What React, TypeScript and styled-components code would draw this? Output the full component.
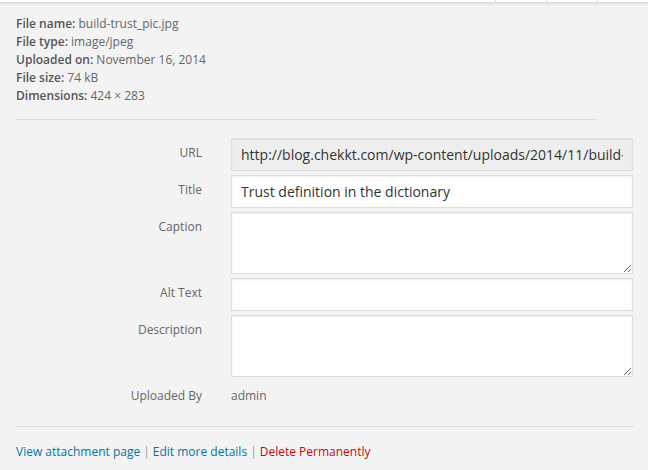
import styled, { createGlobalStyle } from "styled-components";

const GlobalStyle = createGlobalStyle`
  html, body {
    margin: 0;
    padding: 0;
    background: #f3f3f3;
  }
  body {
    font-family: "Open Sans", "Liberation Sans", sans-serif;
    color: #444;
  }
  * { box-sizing: border-box; }
`;

const Sidebar = styled.div`
  width: 648px;
  height: 470px;
  background: #f3f3f3;
  overflow: hidden;
`;

const Toolbar = styled.div`
  height: 3px;
  background: #fff;
  border-bottom: 1px solid #dcdcdc;
  box-shadow: 0 1px 2px rgba(0, 0, 0, 0.08);
  display: flex;
  justify-content: flex-end;
`;

const ToolButton = styled.div`
  width: 51px;
  border-left: 1px solid #dcdcdc;
`;

const Details = styled.div`
  margin: 0 16px;
  padding: 12px 0 14px;
  border-bottom: 1px solid #ddd;
  width: 581px;
  font-size: 12px;
  line-height: 18px;
  color: #666;
`;

const DetailLine = styled.div`
  strong {
    font-weight: 600;
    color: #555;
  }
`;

const Settings = styled.div`
  padding: 18px 15px 0 0;
  display: flex;
  flex-direction: column;
  gap: 4px;
`;

const Row = styled.label`
  display: grid;
  grid-template-columns: 202px 1fr;
  column-gap: 29px;
  align-items: start;
`;

const Name = styled.span`
  text-align: right;
  font-size: 12px;
  color: #666;
  padding-top: 6px;
  line-height: 18px;
`;

const TextInput = styled.input<{ $readOnly?: boolean }>`
  width: 100%;
  height: 33px;
  margin: 0;
  padding: 3px 9px;
  font-family: "Open Sans", "Liberation Sans", sans-serif;
  font-size: 14px;
  color: #333;
  background: ${(p) => (p.$readOnly ? "#eee" : "#fff")};
  border: 1px solid #ddd;
  box-shadow: inset 0 1px 2px rgba(0, 0, 0, 0.07);
  border-radius: 0;
  outline: none;
`;

const TextArea = styled.textarea<{ $h: number }>`
  width: 100%;
  height: ${(p) => p.$h}px;
  margin: 0;
  padding: 3px 9px;
  font-family: "Open Sans", "Liberation Sans", sans-serif;
  font-size: 14px;
  color: #333;
  background: #fff;
  border: 1px solid #ddd;
  box-shadow: inset 0 1px 2px rgba(0, 0, 0, 0.07);
  border-radius: 0;
  outline: none;
  display: block;
`;

const Value = styled.span`
  font-size: 12px;
  color: #666;
  padding-top: 6px;
  line-height: 18px;
`;

const Actions = styled.div`
  margin: 21px 14px 0 16px;
  border-top: 1px solid #ddd;
  padding-top: 16px;
  font-size: 12px;
  line-height: 18px;
  color: #999;
`;

const Link = styled.a<{ $danger?: boolean }>`
  color: ${(p) => (p.$danger ? "#bc0b0b" : "#0074a2")};
  text-decoration: none;
`;

const Sep = styled.span`
  margin: 0 3px;
  color: #999;
`;

const App = () => {
  return (
    <>
      <GlobalStyle />
      <Sidebar>
        <Toolbar>
          <ToolButton />
          <ToolButton />
          <ToolButton />
        </Toolbar>
        <Details>
          <DetailLine><strong>File name:</strong> build-trust_pic.jpg</DetailLine>
          <DetailLine><strong>File type:</strong> image/jpeg</DetailLine>
          <DetailLine><strong>Uploaded on:</strong> November 16, 2014</DetailLine>
          <DetailLine><strong>File size:</strong> 74 kB</DetailLine>
          <DetailLine><strong>Dimensions:</strong> 424 × 283</DetailLine>
        </Details>
        <Settings>
          <Row>
            <Name>URL</Name>
            <TextInput
              $readOnly
              readOnly
              defaultValue="http://blog.chekkt.com/wp-content/uploads/2014/11/build-trust_pic.jpg"
            />
          </Row>
          <Row>
            <Name>Title</Name>
            <TextInput defaultValue="Trust definition in the dictionary" />
          </Row>
          <Row>
            <Name>Caption</Name>
            <TextArea $h={62} />
          </Row>
          <Row>
            <Name>Alt Text</Name>
            <TextInput />
          </Row>
          <Row>
            <Name>Description</Name>
            <TextArea $h={62} />
          </Row>
          <Row>
            <Name>Uploaded By</Name>
            <Value>admin</Value>
          </Row>
        </Settings>
        <Actions>
          <Link href="#">View attachment page</Link>
          <Sep>|</Sep>
          <Link href="#">Edit more details</Link>
          <Sep>|</Sep>
          <Link href="#" $danger>Delete Permanently</Link>
        </Actions>
      </Sidebar>
    </>
  );
};

export default App;
